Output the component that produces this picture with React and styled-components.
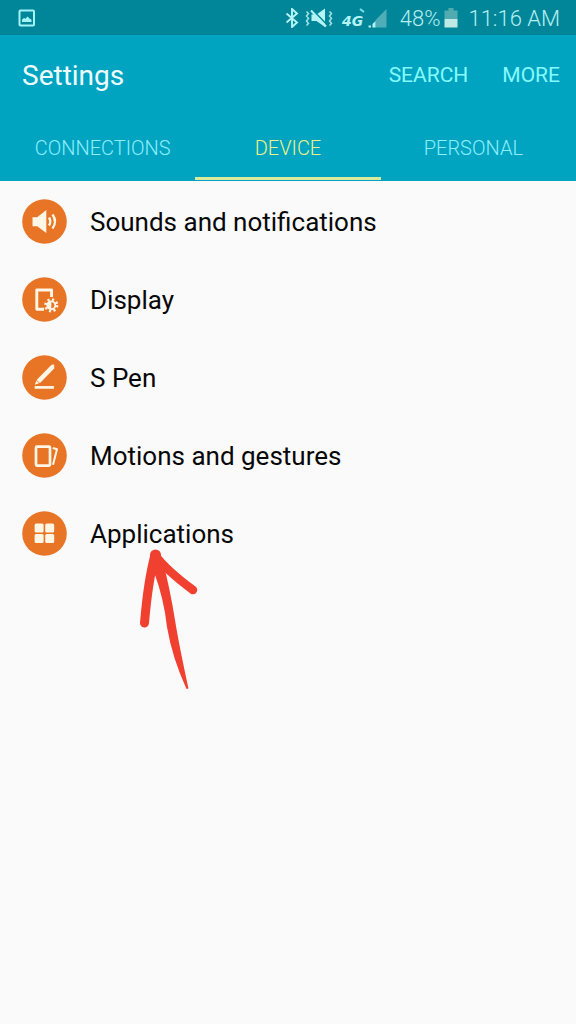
import React from 'react';
import styled, { createGlobalStyle } from 'styled-components';

const GlobalStyle = createGlobalStyle`
  * { box-sizing: border-box; }
  body {
    margin: 0;
    background: #fafafa;
    font-family: Roboto, "Liberation Sans", sans-serif;
  }
`;

const Screen = styled.div`
  min-height: 100vh;
  background: #fafafa;
`;

const StatusBar = styled.div`
  display: flex;
  align-items: center;
  height: 35px;
  padding: 0 16px 0 18px;
  background: #008698;
  color: #b4eef2;
  font-size: 22px;
  line-height: 35px;
  font-weight: 400;
`;

const StatusGroup = styled.div`
  display: flex;
  align-items: center;
  margin-left: auto;
`;

const StatusIcon = styled.svg`
  display: block;
  flex: none;
  margin-right: ${(p) => p.$gap || 0}px;
`;

const StatusText = styled.span`
  margin: 2px ${(p) => p.$gap || 0}px 0 0;
  white-space: nowrap;
  font-weight: 300;
`;

const Header = styled.header`
  padding-bottom: 1px;
  background: #00a4c0;
`;

const Toolbar = styled.div`
  display: flex;
  align-items: center;
  height: 80px;
  padding: 0 16px 0 22px;
`;

const Title = styled.h1`
  margin: 0 auto 0 0;
  padding-top: 2px;
  font-size: 28px;
  line-height: 32px;
  font-weight: 400;
  color: #effcff;
`;

const ToolbarButton = styled.button`
  border: 0;
  margin-left: 34px;
  padding: 0;
  background: none;
  font: inherit;
  font-size: 21px;
  line-height: 32px;
  color: #85faff;
`;

const Tabs = styled.nav`
  display: grid;
  grid-template-columns: repeat(3, 1fr);
  padding: 0 10px;
`;

const Tab = styled.button`
  height: 65px;
  border: 0;
  border-bottom: 3px solid ${(p) => (p.$active ? '#dcea9c' : 'transparent')};
  padding: 4px 0 0;
  background: none;
  font: inherit;
  font-size: 20px;
  font-weight: 300;
  color: ${(p) => (p.$active ? '#f0f08a' : '#8deeff')};
`;

const List = styled.ul`
  margin: 0;
  padding: 1px 0 0;
  list-style: none;
`;

const Item = styled.li`
  position: relative;
`;

const RowLink = styled.a`
  display: flex;
  align-items: center;
  gap: 23px;
  height: 78px;
  padding-left: 22px;
  color: #080808;
  text-decoration: none;
  font-size: 26px;
  line-height: 32px;
`;

const RowLabel = styled.span`
  padding-top: 2px;
`;

const RowIcon = styled.svg`
  display: block;
  flex: none;
  width: 45px;
  height: 45px;
`;

const ArrowMark = styled.svg`
  position: absolute;
  left: 130px;
  top: 51px;
  pointer-events: none;
`;

const INK = '#fff6e6';
const ORANGE = '#e87425';

const glyphs = {
  sound: (
    <>
      <path d="M10.500 18.200h4.700L24.300 11v23L15.200 27.300H10.500z" fill={INK} />
      <path d="M27 18.500q2.600 4 0 8M30.500 15.500q5 7 0 14" fill="none" stroke={INK} strokeWidth="2.400" />
    </>
  ),
  display: (
    <>
      <path d="M22 32.300H14.800V13H29.600V20" fill="none" stroke={INK} strokeWidth="2.900" strokeLinejoin="round" />
      <circle cx="29.300" cy="28.300" r="5.800" fill="none" stroke={INK} strokeWidth="2.600" strokeDasharray="2.100 2.455" />
      <circle cx="29.300" cy="28.300" r="4.900" fill={INK} />
      <path d="M29.300 25.300a3 3 0 0 1 0 6z" fill={ORANGE} />
    </>
  ),
  pen: (
    <>
      <path d="M12.700 29.700L14.800 24.800 28.300 10.900Q30.500 9 32.200 9.800V13.500L18.300 27.700z" fill={INK} />
      <path d="M14.200 25.200l3.700 3.200" stroke={ORANGE} strokeWidth="0.800" />
      <path d="M12.700 32.400h19.200" stroke={INK} strokeWidth="2.700" />
    </>
  ),
  motion: (
    <>
      <rect x="14" y="13.600" width="14" height="19" rx="1" fill="none" stroke={INK} strokeWidth="2.700" />
      <path d="M30.800 15l4.200 1.300-4 15.500" fill="none" stroke={INK} strokeWidth="2" strokeLinejoin="round" />
    </>
  ),
  apps: (
    <g fill={INK}>
      <rect x="12.600" y="12.400" width="9" height="9" rx="1.500" />
      <rect x="23.200" y="12.400" width="9" height="9" rx="1.500" />
      <rect x="12.600" y="23" width="9" height="9" rx="1.500" />
      <rect x="23.200" y="23" width="9" height="9" rx="1.500" />
    </g>
  ),
};

const rows = [
  { icon: 'sound', label: 'Sounds and notifications' },
  { icon: 'display', label: 'Display' },
  { icon: 'pen', label: 'S Pen' },
  { icon: 'motion', label: 'Motions and gestures' },
  { icon: 'apps', label: 'Applications', marked: true },
];

function HandDrawnArrow() {
  return (
    <ArrowMark width="72" height="146" viewBox="0 0 72 146" aria-hidden="true">
      <g fill="none" stroke="#f04030" strokeLinecap="round" strokeLinejoin="round">
        <path d="M25 10Q18 36 14.500 78" strokeWidth="9" />
        <path d="M25 10Q36 25 63 45" strokeWidth="8.500" />
        <path d="M25.500 10V18" strokeWidth="11" />
      </g>
      <path d="M23 18L33 17Q40 44 45 75 49 100 58.500 143.500L56.500 144Q42 112 37 82 34 54 24 27z" fill="#f04030" />
    </ArrowMark>
  );
}

export default function App() {
  return (
    <Screen>
      <GlobalStyle />
      <StatusBar>
        <StatusIcon width="18" height="20" viewBox="0 0 18 20" aria-hidden="true">
          <rect x="1.500" y="2.500" width="14.500" height="15" rx="1" fill="none" stroke="#a4f3f7" strokeWidth="2" />
          <path d="M4 14v-2.500l2-1.500 1.500.8 2-2.300 2 2 2 1.300V14z" fill="#a4f3f7" />
        </StatusIcon>
        <StatusGroup>
          <StatusIcon $gap={6} width="14" height="20" viewBox="0 0 14 20" aria-hidden="true">
            <path d="M1.500 5.500l10.500 9L7 19V1l5 4.500-10.500 9" fill="none" stroke="#b4f4f6" strokeWidth="1.900" />
          </StatusIcon>
          <StatusIcon $gap={8} width="28" height="20" viewBox="0 0 28 20" aria-hidden="true">
            <path d="M6.500 6.500h5L20 .5v18.500l-8.500-6h-5z" fill="#b4f4f6" />
            <path d="M7 1.300L22 16.800" stroke="#008698" strokeWidth="1.600" />
            <path d="M6 2.500L21 18.500" stroke="#b4f4f6" strokeWidth="2" />
            <path d="M1.500 3.500l2 2-2 2.500 2 2.500-2 2.500 2 2.500-2 2M24.500 3.500l2 2-2 2.500 2 2.500-2 2.500 2 2.500-2 2" fill="none" stroke="#9fe2e8" strokeWidth="1.500" />
          </StatusIcon>
          <StatusIcon $gap={0} width="27" height="30" viewBox="-1 -5 27 30">
            <text x="0" y="18" fill="#b4f4f6" fontFamily="'DejaVu Sans', sans-serif" fontSize="14" fontWeight="700" fontStyle="italic">4G</text>
            <path d="M18 1l4 3" stroke="#7cdfea" strokeWidth="2" />
          </StatusIcon>
          <StatusIcon $gap={13} width="19" height="20" viewBox="0 0 19 20" aria-hidden="true">
            <path d="M18.500 1v18.500H7.500V12z" fill="#4fadb7" />
            <path d="M7.500 13v6.500H4.500V16z" fill="#b4f4f6" />
            <rect x="0.500" y="17.500" width="2.500" height="2" fill="#b4f4f6" />
          </StatusIcon>
          <StatusText $gap={4}>48%</StatusText>
          <StatusIcon $gap={10} width="14" height="20" viewBox="0 0 14 20" aria-hidden="true">
            <path d="M4.500 0h5v2.500h4V11H.5V2.500h4z" fill="#52abb0" />
            <rect x="0.500" y="11" width="13" height="8.500" fill="#bfe9e4" />
          </StatusIcon>
          <StatusText>11:16 AM</StatusText>
        </StatusGroup>
      </StatusBar>
      <Header>
        <Toolbar>
          <Title>Settings</Title>
          <ToolbarButton type="button">SEARCH</ToolbarButton>
          <ToolbarButton type="button">MORE</ToolbarButton>
        </Toolbar>
        <Tabs>
          <Tab type="button">CONNECTIONS</Tab>
          <Tab type="button" $active aria-current="page">DEVICE</Tab>
          <Tab type="button">PERSONAL</Tab>
        </Tabs>
      </Header>
      <List>
        {rows.map(({ icon, label, marked }) => (
          <Item key={icon}>
            <RowLink href="#">
              <RowIcon viewBox="0 0 45 45" aria-hidden="true">
                <circle cx="22.500" cy="22.500" r="22.300" fill={ORANGE} />
                {glyphs[icon]}
              </RowIcon>
              <RowLabel>{label}</RowLabel>
            </RowLink>
            {marked && <HandDrawnArrow />}
          </Item>
        ))}
      </List>
    </Screen>
  );
}
